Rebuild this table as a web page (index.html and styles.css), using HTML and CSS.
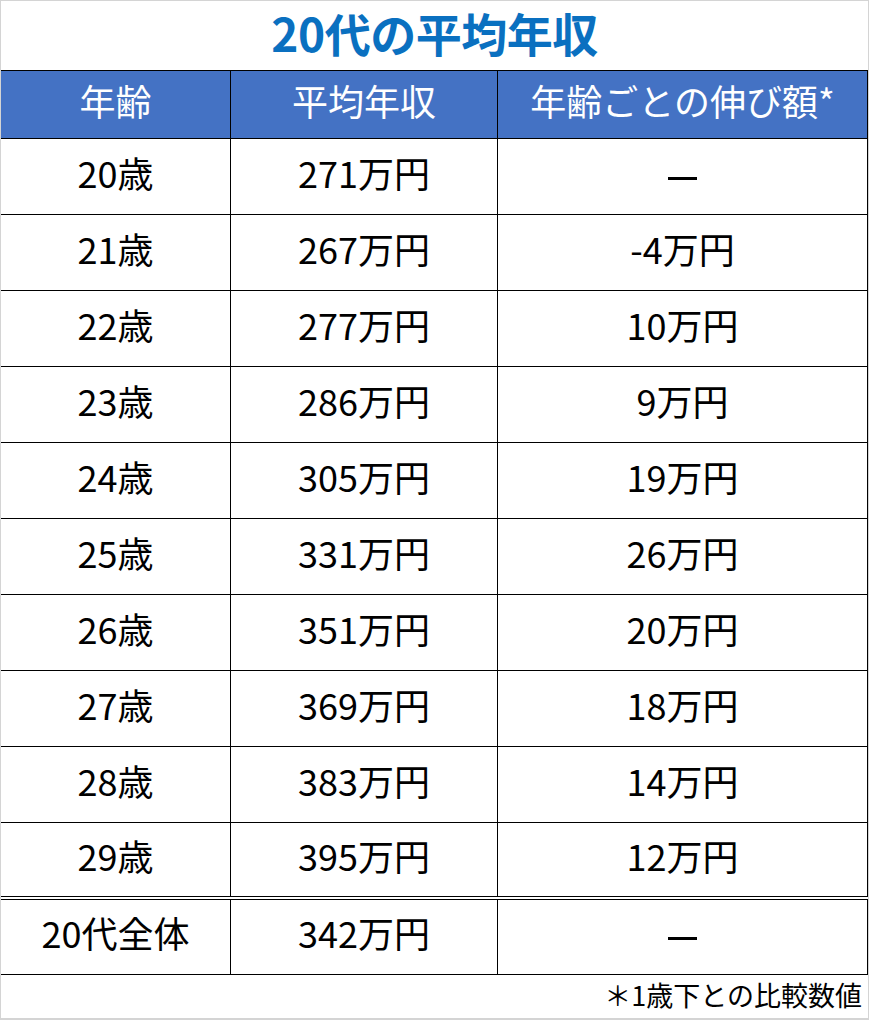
FILE: index.html
```html
<!DOCTYPE html>
<html lang="ja">
<head>
<meta charset="utf-8">
<link rel="stylesheet" href="styles.css">
</head>
<body>
<div class="frame">
  <h1 class="title">20代の平均年収</h1>
  <table class="salary">
    <thead>
      <tr><th class="c1">年齢</th><th class="c2">平均年収</th><th class="c3">年齢ごとの伸び額*</th></tr>
    </thead>
    <tbody>
      <tr><td>20歳</td><td>271万円</td><td><span class="dash"></span></td></tr>
      <tr><td>21歳</td><td>267万円</td><td>-4万円</td></tr>
      <tr><td>22歳</td><td>277万円</td><td>10万円</td></tr>
      <tr><td>23歳</td><td>286万円</td><td>9万円</td></tr>
      <tr><td>24歳</td><td>305万円</td><td>19万円</td></tr>
      <tr><td>25歳</td><td>331万円</td><td>26万円</td></tr>
      <tr><td>26歳</td><td>351万円</td><td>20万円</td></tr>
      <tr><td>27歳</td><td>369万円</td><td>18万円</td></tr>
      <tr><td>28歳</td><td>383万円</td><td>14万円</td></tr>
      <tr class="last"><td>29歳</td><td>395万円</td><td>12万円</td></tr>
      <tr class="total"><td>20代全体</td><td>342万円</td><td><span class="dash"></span></td></tr>
    </tbody>
  </table>
  <p class="note">＊1歳下との比較数値</p>
</div>
</body>
</html>
```

FILE: styles.css
```css
html, body {
  margin: 0;
  padding: 0;
  background: #ffffff;
}
.frame {
  box-sizing: border-box;
  width: 869px;
  height: 1020px;
  border: 1px solid #d4d4d4;
  border-bottom-width: 2px;
  font-family: "Noto Sans CJK JP", "Noto Sans", sans-serif;
  color: #000;
  display: flex;
  flex-direction: column;
  overflow: hidden;
}
.title {
  flex-shrink: 0;
  margin: 0;
  padding: 3px 0 10px;
  text-align: center;
  font-size: 46px;
  font-weight: 700;
  color: #0a70c0;
  letter-spacing: -0.5px;
  line-height: 56px;
}
.salary {
  flex-shrink: 0;
  width: 867px;
  border-collapse: collapse;
  table-layout: fixed;
}
.salary th, .salary td {
  text-align: center;
  vertical-align: middle;
  padding: 0 0 8px;
  font-size: 36px;
  line-height: 1.2;
  border-right: 1px solid #000;
  border-bottom: 1px solid #000;
}
.salary th {
  background: #4472c4;
  color: #fff;
  font-weight: 400;
  height: 59px;
  border-top: 1px solid #000;
}
.salary td {
  height: 67px;
}
.c1 { width: 229px; }
.c2 { width: 266px; }
.c3 { width: auto; }
.salary tr.last td {
  height: 65px;
  border-bottom: 4px double #000;
}
.salary tr.total td {
  height: 66px;
}
.dash {
  display: inline-block;
  width: 29px;
  height: 3px;
  background: #000;
  vertical-align: middle;
}
.note {
  flex: 1;
  margin: 0;
  display: flex;
  align-items: center;
  justify-content: flex-end;
  padding: 0 6px 2px 0;
  font-size: 27px;
  line-height: 1.2;
}
```
